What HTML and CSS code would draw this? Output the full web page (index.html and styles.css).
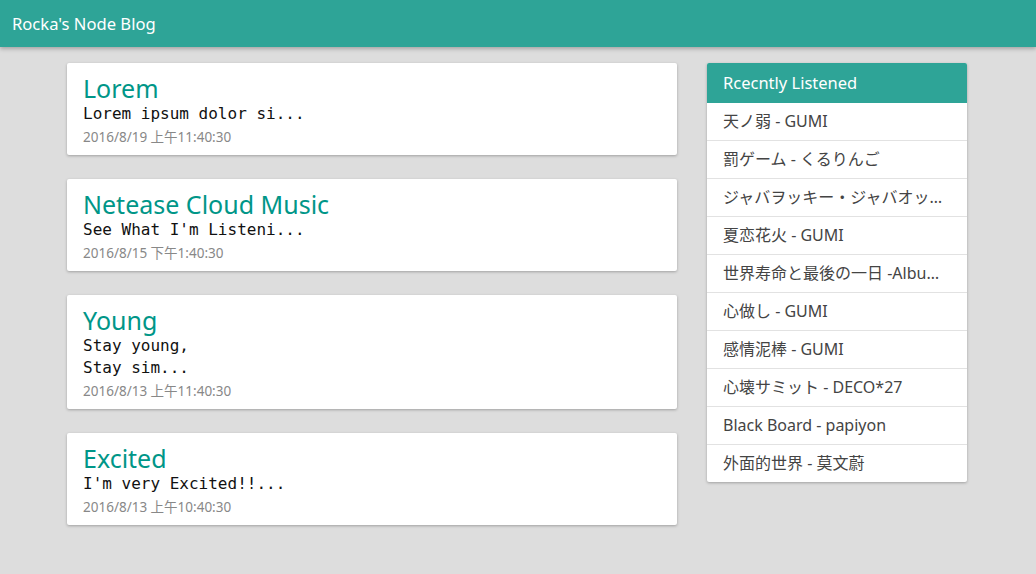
FILE: index.html
```html
<!DOCTYPE html>
<html lang="zh">
<head>
<meta charset="utf-8">
<title>Rocka's Node Blog</title>
<link rel="stylesheet" href="styles.css">
</head>
<body>
<header class="navbar">
  <span class="brand">Rocka's Node Blog</span>
</header>
<main class="layout">
  <section class="posts">
    <article class="card">
      <h2 class="post-title">Lorem</h2>
      <p class="post-body">Lorem ipsum dolor si...</p>
      <div class="post-date">2016/8/19 上午11:40:30</div>
    </article>
    <article class="card">
      <h2 class="post-title">Netease Cloud Music</h2>
      <p class="post-body">See What I'm Listeni...</p>
      <div class="post-date">2016/8/15 下午1:40:30</div>
    </article>
    <article class="card">
      <h2 class="post-title">Young</h2>
      <p class="post-body">Stay young,<br>Stay sim...</p>
      <div class="post-date">2016/8/13 上午11:40:30</div>
    </article>
    <article class="card">
      <h2 class="post-title">Excited</h2>
      <p class="post-body">I'm very Excited!!...</p>
      <div class="post-date">2016/8/13 上午10:40:30</div>
    </article>
  </section>
  <aside class="panel">
    <div class="panel-head">Rcecntly Listened</div>
    <ul class="songs">
      <li>天ノ弱 - GUMI</li>
      <li>罰ゲーム - くるりんご</li>
      <li>ジャバヲッキー・ジャバオッキー - GUMI</li>
      <li>夏恋花火 - GUMI</li>
      <li>世界寿命と最後の一日 -Album Mix- - GUMI</li>
      <li>心做し - GUMI</li>
      <li>感情泥棒 - GUMI</li>
      <li>心壊サミット - DECO*27</li>
      <li>Black Board - papiyon</li>
      <li>外面的世界 - 莫文蔚</li>
    </ul>
  </aside>
</main>
</body>
</html>
```
FILE: styles.css
```css
html, body {
  margin: 0;
  padding: 0;
}
body {
  background: #dddddd;
  font-family: "Noto Sans", "Noto Sans CJK SC", sans-serif;
  height: 574px;
  overflow: hidden;
}
.navbar {
  height: 47px;
  background: #2ea497;
  box-shadow: 0 2px 4px rgba(0, 0, 0, 0.25);
  display: flex;
  align-items: center;
  padding-left: 12px;
}
.brand {
  color: #ffffff;
  font-size: 16.6px;
  line-height: 20px;
}
.layout {
  display: flex;
  gap: 30px;
  width: 900px;
  margin: 16px 0 0 calc(50% - 451px);
  align-items: flex-start;
}
.posts {
  width: 610px;
  display: flex;
  flex-direction: column;
  gap: 24px;
}
.card {
  background: #ffffff;
  border-radius: 2px;
  box-shadow: 0 1px 3px rgba(0, 0, 0, 0.28);
  padding: 10px 16px 8px;
}
.post-title {
  margin: 0;
  font-weight: normal;
  font-size: 25px;
  line-height: 30px;
  color: #009688;
}
.post-body {
  margin: 0;
  font-family: "DejaVu Sans Mono", monospace;
  font-size: 16px;
  line-height: 22px;
  color: #111111;
}
.post-date {
  margin-top: 2px;
  font-size: 13.5px;
  line-height: 20px;
  color: #888888;
}
.panel {
  width: 260px;
  background: #ffffff;
  border-radius: 2px;
  box-shadow: 0 1px 3px rgba(0, 0, 0, 0.28);
  overflow: hidden;
}
.panel-head {
  height: 40px;
  line-height: 40px;
  background: #2ea497;
  color: #ffffff;
  font-size: 16.5px;
  padding: 0 16px;
}
.songs {
  list-style: none;
  margin: 0;
  padding: 0;
}
.songs li {
  height: 37px;
  line-height: 37px;
  padding: 0 16px;
  font-size: 16px;
  color: #444444;
  white-space: nowrap;
  overflow: hidden;
  text-overflow: ellipsis;
  border-bottom: 1px solid #e2e2e2;
}
.songs li:last-child {
  border-bottom: none;
}
```
